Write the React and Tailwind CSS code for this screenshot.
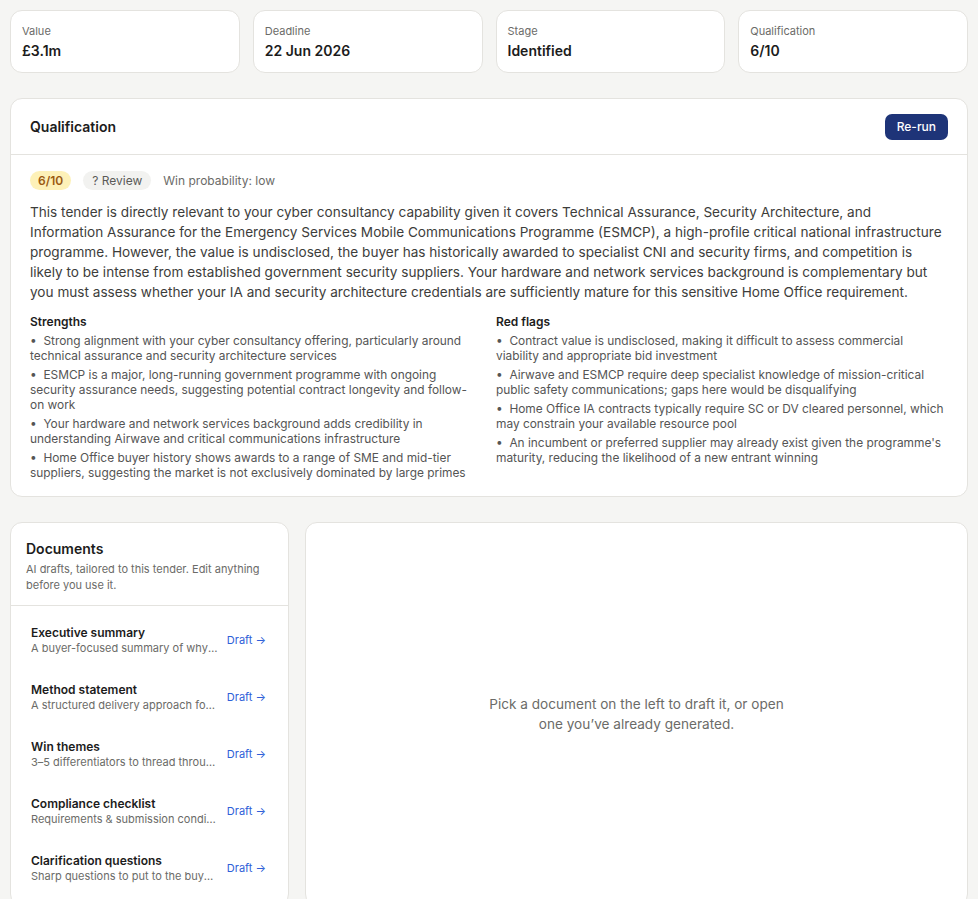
import { useState } from "react";

const stats = [
  { label: "Value", value: "£3.1m" },
  { label: "Deadline", value: "22 Jun 2026" },
  { label: "Stage", value: "Identified" },
  { label: "Qualification", value: "6/10" },
];

const strengths = [
  "Strong alignment with your cyber consultancy offering, particularly around technical assurance and security architecture services",
  "ESMCP is a major, long-running government programme with ongoing security assurance needs, suggesting potential contract longevity and follow-on work",
  "Your hardware and network services background adds credibility in understanding Airwave and critical communications infrastructure",
  "Home Office buyer history shows awards to a range of SME and mid-tier suppliers, suggesting the market is not exclusively dominated by large primes",
];

const redFlags = [
  "Contract value is undisclosed, making it difficult to assess commercial viability and appropriate bid investment",
  "Airwave and ESMCP require deep specialist knowledge of mission-critical public safety communications; gaps here would be disqualifying",
  "Home Office IA contracts typically require SC or DV cleared personnel, which may constrain your available resource pool",
  "An incumbent or preferred supplier may already exist given the programme's maturity, reducing the likelihood of a new entrant winning",
];

const docs = [
  { title: "Executive summary", desc: "A buyer-focused summary of why you are the right supplier" },
  { title: "Method statement", desc: "A structured delivery approach for this contract" },
  { title: "Win themes", desc: "3–5 differentiators to thread through your bid" },
  { title: "Compliance checklist", desc: "Requirements & submission conditions to tick off" },
  { title: "Clarification questions", desc: "Sharp questions to put to the buyer before you bid" },
];

function BulletList({ title, items }) {
  return (
    <div>
      <div className="mb-[4px] text-[12px] font-semibold leading-[15px] text-[#1c1c1c]">{title}</div>
      <ul className="flex flex-col gap-[4px]">
        {items.map((t) => (
          <li key={t} className="text-[11.9px] leading-[15px] text-[#555]">
            •&nbsp;&nbsp;{t}
          </li>
        ))}
      </ul>
    </div>
  );
}

export default function App() {
  const [selected, setSelected] = useState(null);

  return (
    <div className="min-h-screen bg-[#f5f5f3] px-[10px] pt-[10px] font-['Inter',sans-serif] text-[#1c1c1c]">
      <div className="grid grid-cols-4 gap-[13px]">
        {stats.map((s) => (
          <div key={s.label} className="h-[63px] rounded-[12px] border border-[#e4e3df] bg-white px-[11px] pt-[13px]">
            <div className="text-[11px] leading-[14px] text-[#6b6b68]">{s.label}</div>
            <div className="mt-[4px] text-[14px] font-semibold leading-[18px] text-[#1c1c1c]">{s.value}</div>
          </div>
        ))}
      </div>

      <div className="mt-[25px] rounded-[12px] border border-[#e4e3df] bg-white">
        <div className="flex h-[56px] items-center justify-between border-b border-[#e4e3df] px-[19px]">
          <h3 className="text-[14px] font-semibold">Qualification</h3>
          <button className="h-[26px] rounded-[7px] bg-[#1e3478] px-[12px] text-[12px] font-medium text-white">
            Re-run
          </button>
        </div>
        <div className="px-[19px] pt-[16px] pb-[16px]">
          <div className="flex items-center gap-[12px]">
            <span className="rounded-full bg-[#fdf1b8] px-[8px] py-[2px] text-[12px] font-semibold leading-[15px] text-[#9a5a12]">
              6/10
            </span>
            <span className="rounded-full bg-[#f2f2f0] px-[9px] py-[2px] text-[12px] leading-[15px] text-[#5a5a58]">
              ? Review
            </span>
            <span className="text-[12px] text-[#6b6b68]">Win probability: low</span>
          </div>
          <p className="mt-[12px] text-[13.6px] leading-[20px] text-[#3d3d3b]">
            This tender is directly relevant to your cyber consultancy capability given it covers Technical Assurance,
            Security Architecture, and Information Assurance for the Emergency Services Mobile Communications Programme
            (ESMCP), a high-profile critical national infrastructure programme. However, the value is undisclosed, the
            buyer has historically awarded to specialist CNI and security firms, and competition is likely to be intense
            from established government security suppliers. Your hardware and network services background is
            complementary but you must assess whether your IA and security architecture credentials are sufficiently
            mature for this sensitive Home Office requirement.
          </p>
          <div className="mt-[12px] grid grid-cols-[446px_1fr] gap-[20px]">
            <BulletList title="Strengths" items={strengths} />
            <BulletList title="Red flags" items={redFlags} />
          </div>
        </div>
      </div>

      <div className="mt-[25px] grid grid-cols-[279px_1fr] gap-[16px]">
        <div className="rounded-[12px] border border-[#e4e3df] bg-white pb-[8px]">
          <div className="border-b border-[#e4e3df] px-[15px] pt-[16px] pb-[12px]">
            <h3 className="text-[14px] font-semibold leading-[20px]">Documents</h3>
            <p className="mt-[2px] text-[11px] leading-[16px] text-[#6b6b68]">
              AI drafts, tailored to this tender. Edit anything before you use it.
            </p>
          </div>
          <div className="flex flex-col px-[8px] pt-[6px]">
            {docs.map((d) => (
              <button
                key={d.title}
                onClick={() => setSelected(d.title)}
                className={`flex h-[57px] items-center gap-[8px] rounded-[8px] pl-[12px] pr-[14px] text-left ${
                  selected === d.title ? "bg-[#f5f5f3]" : ""
                }`}
              >
                <div className="min-w-0 flex-1">
                  <div className="truncate text-[12px] font-semibold leading-[16px] text-[#1c1c1c]">{d.title}</div>
                  <div className="truncate text-[11px] leading-[15px] text-[#6b6b68]">{d.desc}</div>
                </div>
                <span className="shrink-0 text-[11px] text-[#2f5fd8]">Draft →</span>
              </button>
            ))}
          </div>
        </div>
        <div className="flex items-center justify-center rounded-[12px] border border-[#e4e3df] bg-white">
          <p className="max-w-[310px] text-center text-[13.6px] leading-[20px] text-[#6b6b68]">
            Pick a document on the left to draft it, or open one you’ve already generated.
          </p>
        </div>
      </div>
    </div>
  );
}
